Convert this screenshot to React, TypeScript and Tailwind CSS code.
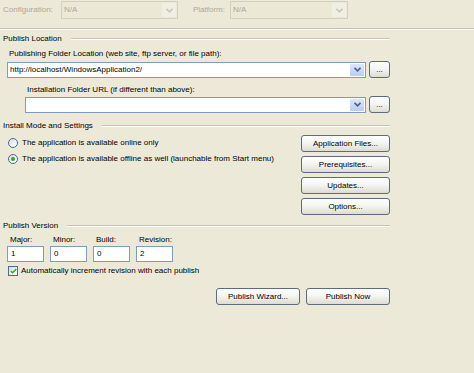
import React from 'react'

function Chevron({ disabled }: { disabled?: boolean }) {
  return (
    <svg width="7" height="5" viewBox="0 0 7 5">
      <path d="M0.5 0.8 L3.5 3.8 L6.5 0.8" fill="none" stroke={disabled ? '#c9c7ba' : '#4d6185'} strokeWidth="1.6" />
    </svg>
  )
}

function Combo({ width, value, disabled }: { width: string; value?: string; disabled?: boolean }) {
  return (
    <div
      className={`flex items-stretch ${width} ${disabled ? 'h-[18px]' : 'h-[16px]'} border ${
        disabled ? 'border-[#d2d0c3] bg-[#ebe8d6] text-[#aca899]' : 'border-[#7f9db9] bg-white text-black'
      }`}
    >
      <div className="flex-1 flex items-center pl-[2px] whitespace-nowrap overflow-hidden">{value}</div>
      <div
        className={`w-[14px] m-[1px] flex items-center justify-center rounded-[1px] ${
          disabled ? 'bg-[#f1efe4]' : 'bg-gradient-to-b from-[#dde6fc] to-[#b9cbf7]'
        }`}
      >
        <Chevron disabled={disabled} />
      </div>
    </div>
  )
}

function Button({ children, width }: { children: React.ReactNode; width: string }) {
  return (
    <div
      className={`${width} h-[17px] flex items-center justify-center rounded-[3px] border border-[#5d6b7d] bg-gradient-to-b from-white via-[#f3f3ef] to-[#dedcd2] text-black whitespace-nowrap`}
    >
      {children}
    </div>
  )
}

function GroupHeader({ title }: { title: string }) {
  return (
    <div className="flex items-center h-[12px] w-[390px]">
      <span className="pl-[3px] pr-[9px] whitespace-nowrap">{title}</span>
      <div className="flex-1 flex flex-col">
        <div className="h-px bg-[#c7c4b4]" />
        <div className="h-px bg-white" />
      </div>
    </div>
  )
}

function Radio({ checked }: { checked?: boolean }) {
  return (
    <div className="w-[10px] h-[10px] rounded-full border border-[#4a6a90] bg-gradient-to-br from-[#dcdcd5] to-white flex items-center justify-center">
      {checked && <div className="w-[4px] h-[4px] rounded-full bg-[#2fa62f]" />}
    </div>
  )
}

function TextBox({ value }: { value: string }) {
  return (
    <div className="w-[37px] h-[16px] border border-[#7f9db9] bg-white flex items-center pl-[3px]">{value}</div>
  )
}

export default function App() {
  const versions = [
    { label: 'Major:', value: '1' },
    { label: 'Minor:', value: '0' },
    { label: 'Build:', value: '0' },
    { label: 'Revision:', value: '2' },
  ]

  return (
    <div
      className="w-[474px] h-[373px] bg-[#ece9d8] text-[8px] leading-[12px] text-black overflow-hidden"
      style={{ fontFamily: '"Liberation Sans", Arial, sans-serif' }}
    >
      {/* configuration bar (disabled) */}
      <div className="flex items-center h-[19px] pt-[1px] text-[#aca899]">
        <span className="pl-[3px] w-[61px]">Configuration:</span>
        <Combo width="w-[117px]" value="N/A" disabled />
        <span className="pl-[15px] w-[52px]">Platform:</span>
        <Combo width="w-[118px]" value="N/A" disabled />
      </div>
      <div className="mt-[9px] flex flex-col">
        <div className="h-px bg-[#c7c4b4]" />
        <div className="h-px bg-white" />
      </div>

      {/* Publish Location */}
      <div className="mt-[3px]">
        <GroupHeader title="Publish Location" />
      </div>
      <div className="mt-[3px] pl-[9px]">Publishing Folder Location (web site, ftp server, or file path):</div>
      <div className="mt-[1px] pl-[7px] flex items-center gap-[3px]">
        <Combo width="w-[359px]" value="http://localhost/WindowsApplication2/" />
        <Button width="w-[21px]">...</Button>
      </div>
      <div className="mt-[6px] pl-[27px]">Installation Folder URL (if different than above):</div>
      <div className="pl-[25px] flex items-center gap-[3px]">
        <Combo width="w-[341px]" />
        <Button width="w-[21px]">...</Button>
      </div>

      {/* Install Mode and Settings */}
      <div className="mt-[7px]">
        <GroupHeader title="Install Mode and Settings" />
      </div>
      <div className="mt-[3px] flex w-[390px]">
        <div className="flex-1 flex flex-col pl-[8px]">
          <div className="h-[16px] flex items-center gap-[4px]">
            <Radio />
            <span>The application is available online only</span>
          </div>
          <div className="h-[16px] flex items-center gap-[4px]">
            <Radio checked />
            <span>The application is available offline as well (launchable from Start menu)</span>
          </div>
        </div>
        <div className="flex flex-col gap-[4px]">
          <Button width="w-[89px]">Application Files...</Button>
          <Button width="w-[89px]">Prerequisites...</Button>
          <Button width="w-[89px]">Updates...</Button>
          <Button width="w-[89px]">Options...</Button>
        </div>
      </div>

      {/* Publish Version */}
      <div className="mt-[5px]">
        <GroupHeader title="Publish Version" />
      </div>
      <div className="mt-[2px] pl-[7px] flex gap-[6px]">
        {versions.map((v) => (
          <div key={v.label} className="flex flex-col">
            <span className="pl-[3px] h-[12px]">{v.label}</span>
            <TextBox value={v.value} />
          </div>
        ))}
      </div>
      <div className="mt-[2px] pl-[8px] h-[14px] flex items-center gap-[3px]">
        <div className="w-[10px] h-[10px] border border-[#4a6a90] bg-gradient-to-br from-[#dcdcd5] to-white flex items-center justify-center">
          <svg width="7" height="6" viewBox="0 0 8 7">
            <path d="M0.8 3.4 L3 5.6 L7.2 1.2" fill="none" stroke="#2fa62f" strokeWidth="1.7" />
          </svg>
        </div>
        <span>Automatically increment revision with each publish</span>
      </div>

      <div className="mt-[10px] w-[390px] flex justify-end gap-[6px]">
        <Button width="w-[84px]">Publish Wizard...</Button>
        <Button width="w-[84px]">Publish Now</Button>
      </div>
    </div>
  )
}
